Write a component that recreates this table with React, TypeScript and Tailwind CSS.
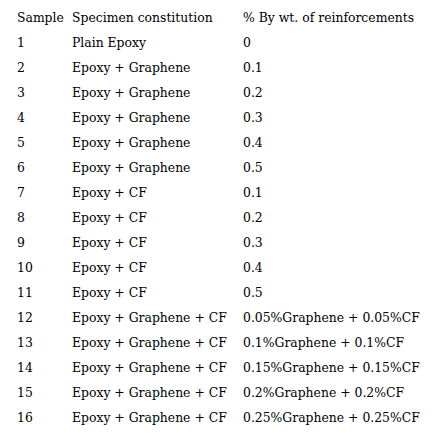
import React from 'react';

const rows: [string, string, string][] = [
  ['1', 'Plain Epoxy', '0'],
  ['2', 'Epoxy + Graphene', '0.1'],
  ['3', 'Epoxy + Graphene', '0.2'],
  ['4', 'Epoxy + Graphene', '0.3'],
  ['5', 'Epoxy + Graphene', '0.4'],
  ['6', 'Epoxy + Graphene', '0.5'],
  ['7', 'Epoxy + CF', '0.1'],
  ['8', 'Epoxy + CF', '0.2'],
  ['9', 'Epoxy + CF', '0.3'],
  ['10', 'Epoxy + CF', '0.4'],
  ['11', 'Epoxy + CF', '0.5'],
  ['12', 'Epoxy + Graphene + CF', '0.05%Graphene + 0.05%CF'],
  ['13', 'Epoxy + Graphene + CF', '0.1%Graphene + 0.1%CF'],
  ['14', 'Epoxy + Graphene + CF', '0.15%Graphene + 0.15%CF'],
  ['15', 'Epoxy + Graphene + CF', '0.2%Graphene + 0.2%CF'],
  ['16', 'Epoxy + Graphene + CF', '0.25%Graphene + 0.25%CF'],
];

function Row({ cells }: { cells: [string, string, string] }) {
  return (
    <div className="grid grid-cols-[55px_171px_1fr] h-[25px] items-center whitespace-nowrap">
      <span>{cells[0]}</span>
      <span>{cells[1]}</span>
      <span>{cells[2]}</span>
    </div>
  );
}

export default function App() {
  return (
    <div className="w-[441px] h-[433px] bg-white text-black pl-[17px] pt-[6px] text-[12.4px] font-['DejaVu_Serif',serif]">
      <Row cells={['Sample', 'Specimen constitution', '% By wt. of reinforcements']} />
      {rows.map((r) => (
        <Row key={r[0]} cells={r} />
      ))}
    </div>
  );
}
